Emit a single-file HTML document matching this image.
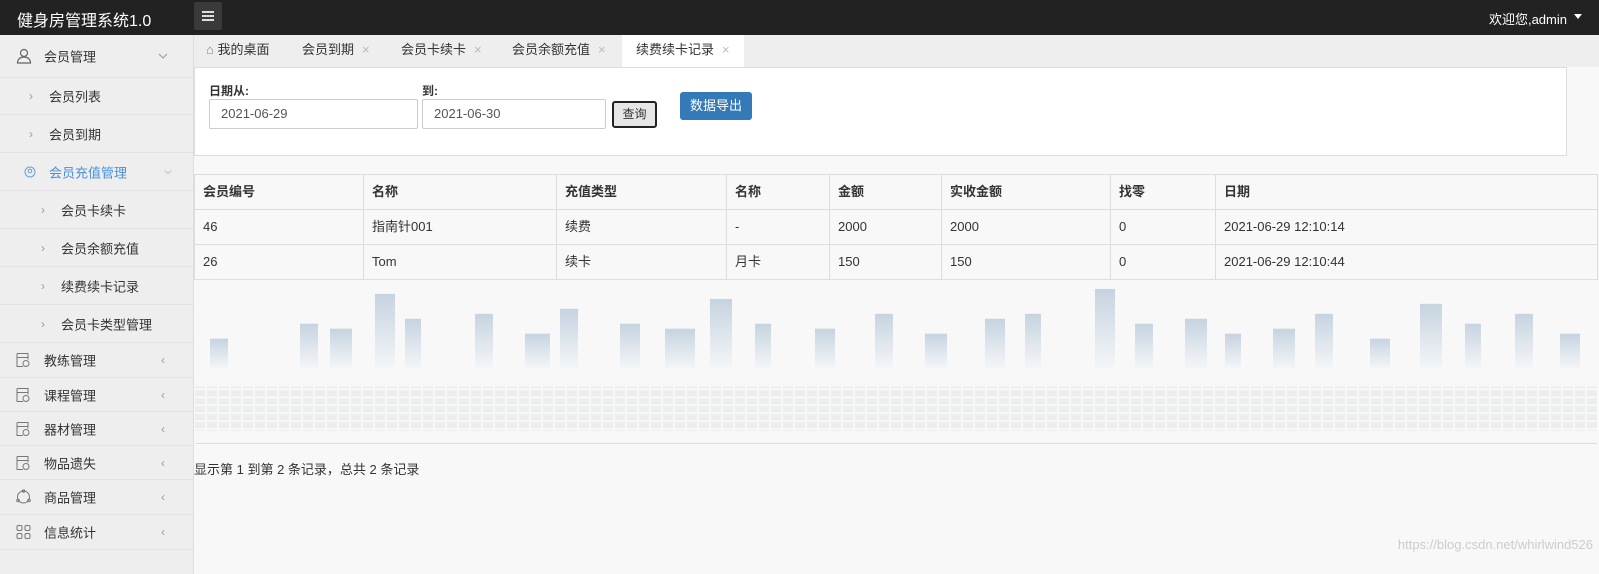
<!DOCTYPE html>
<html><head><meta charset="utf-8"><style>
*{margin:0;padding:0;box-sizing:border-box}
body{width:1599px;height:574px;overflow:hidden;background:#f8f8f8;font-family:"Liberation Sans","Noto Sans CJK SC",sans-serif;font-size:13px;color:#333;position:relative}
.top{position:absolute;left:0;top:0;width:1599px;height:35px;background:#222}
.logo{position:absolute;left:17px;top:7px;color:#fff;font-size:16px}
.ham{position:absolute;left:194px;top:2px;width:28px;height:28px;background:#3a3a3a;border-radius:2px}
.ham i{position:absolute;left:8px;width:12px;height:1.5px;background:#ddd}
.user{position:absolute;right:32px;top:9px;color:#fff;font-size:13px}
.caret{position:absolute;right:17px;top:14px;border:4px solid transparent;border-top:5px solid #fff}
.side{position:absolute;left:0;top:35px;width:194px;height:539px;background:#eee;border-right:1px solid #ddd}
.it{position:absolute;left:0;width:193px;border-bottom:1px solid #e2e2e2;font-size:13px;color:#333}
.it span{position:absolute;top:50%;transform:translateY(-50%)}
.it svg{position:absolute;left:16px;top:50%;transform:translateY(-50%)}
.ar{color:#999;font-size:12px}
.tabs{position:absolute;left:194px;top:35px;width:1405px;height:32px;background:#eee}
.tab{position:absolute;top:0;height:32px;line-height:30px;font-size:13px;color:#333}
.tab b{font-weight:normal;color:#bbb;margin-left:8px}
.panel{position:absolute;left:194px;top:67px;width:1373px;height:89px;background:#fff;border:1px solid #ddd}
.lbl{position:absolute;font-weight:bold;font-size:12px}
.inp{position:absolute;height:30px;border:1px solid #ccc;border-radius:2px;line-height:28px;padding-left:11px;font-size:13px;color:#555;background:#fff}
.q{position:absolute;left:612px;top:101px;width:45px;height:27px;border:2px solid #222;border-radius:3px;background:#e6e6e6;text-align:center;line-height:23px;font-size:12px}
.exp{position:absolute;left:680px;top:92px;width:72px;height:28px;background:#337ab7;border-radius:3px;color:#fff;text-align:center;line-height:27px;font-size:13px}
table{position:absolute;left:194px;top:174px;width:1404px;border-collapse:collapse;font-size:13px}
td,th{border:1px solid #ddd;height:35px;padding:0 0 0 8px;text-align:left;line-height:16px}
th{font-weight:bold}
.city{position:absolute;left:195px;top:279px;width:1402px;height:165px;border-bottom:1px solid #ddd}
.foot{position:absolute;left:194px;top:459px;font-size:13px}
.wm{position:absolute;right:6px;top:537px;color:#ccc;font-size:13px}
</style></head><body>
<div class="top"><div class="logo">健身房管理系统1.0</div>
<div class="ham"><i style="top:9px"></i><i style="top:13px"></i><i style="top:17px"></i></div>
<div class="user">欢迎您,admin</div><div class="caret"></div></div>
<div class="side">
<div class="it" style="top:0;height:43px"><svg width="16" height="16" viewBox="0 0 16 16" fill="none" stroke="#666" stroke-width="1.2"><circle cx="8" cy="5" r="3.5"/><path d="M1.5 15c0-4 3-6 6.5-6s6.5 2 6.5 6z"/></svg><span style="left:44px">会员管理</span><svg style="left:158px" width="10" height="6" viewBox="0 0 10 6" fill="none" stroke="#999"><path d="M1 1l4 4 4-4"/></svg></div>
<div class="it" style="top:43px;height:37px"><span class="ar" style="left:29px">›</span><span style="left:49px">会员列表</span></div>
<div class="it" style="top:80px;height:38px"><span class="ar" style="left:29px">›</span><span style="left:49px">会员到期</span></div>
<div class="it" style="top:118px;height:38px;color:#4a90d9"><svg style="left:24px" width="12" height="12" viewBox="0 0 12 12" fill="none" stroke="#6a9fd8"><circle cx="6" cy="6" r="5"/><circle cx="6" cy="5" r="1.8"/></svg><span style="left:49px">会员充值管理</span><svg style="left:164px" width="8" height="5" viewBox="0 0 10 6" fill="none" stroke="#9bc"><path d="M1 1l4 4 4-4"/></svg></div>
<div class="it" style="top:156px;height:38px"><span class="ar" style="left:41px">›</span><span style="left:61px">会员卡续卡</span></div>
<div class="it" style="top:194px;height:38px"><span class="ar" style="left:41px">›</span><span style="left:61px">会员余额充值</span></div>
<div class="it" style="top:232px;height:38px"><span class="ar" style="left:41px">›</span><span style="left:61px">续费续卡记录</span></div>
<div class="it" style="top:270px;height:38px"><span class="ar" style="left:41px">›</span><span style="left:61px">会员卡类型管理</span></div>
<div class="it" style="top:308px;height:35px"><svg width="14" height="15" viewBox="0 0 14 15" fill="none" stroke="#777"><path d="M1 1h11v6M1 1v13h6M1 5h11"/><circle cx="10" cy="11" r="3"/></svg><span style="left:44px">教练管理</span><span class="ar" style="left:161px">‹</span></div>
<div class="it" style="top:343px;height:34px"><svg width="14" height="15" viewBox="0 0 14 15" fill="none" stroke="#777"><path d="M1 1h11v6M1 1v13h6M1 5h11"/><circle cx="10" cy="11" r="3"/></svg><span style="left:44px">课程管理</span><span class="ar" style="left:161px">‹</span></div>
<div class="it" style="top:377px;height:34px"><svg width="14" height="15" viewBox="0 0 14 15" fill="none" stroke="#777"><path d="M1 1h11v6M1 1v13h6M1 5h11"/><circle cx="10" cy="11" r="3"/></svg><span style="left:44px">器材管理</span><span class="ar" style="left:161px">‹</span></div>
<div class="it" style="top:411px;height:34px"><svg width="14" height="15" viewBox="0 0 14 15" fill="none" stroke="#777"><path d="M1 1h11v6M1 1v13h6M1 5h11"/><circle cx="10" cy="11" r="3"/></svg><span style="left:44px">物品遗失</span><span class="ar" style="left:161px">‹</span></div>
<div class="it" style="top:445px;height:35px"><svg width="15" height="15" viewBox="0 0 15 15" fill="none" stroke="#777"><circle cx="7.5" cy="7.5" r="6"/><circle cx="7.5" cy="1.5" r="1.3"/><circle cx="2" cy="11" r="1.3"/><circle cx="13" cy="11" r="1.3"/></svg><span style="left:44px">商品管理</span><span class="ar" style="left:161px">‹</span></div>
<div class="it" style="top:480px;height:35px"><svg width="15" height="15" viewBox="0 0 15 15" fill="none" stroke="#777"><rect x="1" y="1" width="5" height="5" rx="1.5"/><rect x="9" y="1" width="5" height="5" rx="1.5"/><rect x="1" y="9" width="5" height="5" rx="1.5"/><rect x="9" y="9" width="5" height="5" rx="1.5"/></svg><span style="left:44px">信息统计</span><span class="ar" style="left:161px">‹</span></div>
</div>
<div class="tabs">
<div class="tab" style="left:12px"><span style="color:#888">&#8962;</span> 我的桌面</div>
<div class="tab" style="left:108px">会员到期<b>×</b></div>
<div class="tab" style="left:207px">会员卡续卡<b>×</b></div>
<div class="tab" style="left:318px">会员余额充值<b>×</b></div>
<div class="tab" style="left:428px;width:122px;background:#fff;padding-left:14px">续费续卡记录<b>×</b></div>
</div>
<div class="panel"></div>
<div class="lbl" style="left:209px;top:82px">日期从:</div>
<div class="inp" style="left:209px;top:99px;width:209px">2021-06-29</div>
<div class="lbl" style="left:422px;top:82px">到:</div>
<div class="inp" style="left:422px;top:99px;width:184px">2021-06-30</div>
<div class="q">查询</div>
<div class="exp">数据导出</div>
<table>
<tr><th style="width:169px">会员编号</th><th style="width:193px">名称</th><th style="width:170px">充值类型</th><th style="width:103px">名称</th><th style="width:112px">金额</th><th style="width:169px">实收金额</th><th style="width:105px">找零</th><th>日期</th></tr>
<tr><td>46</td><td>指南针001</td><td>续费</td><td>-</td><td>2000</td><td>2000</td><td>0</td><td>2021-06-29 12:10:14</td></tr>
<tr><td>26</td><td>Tom</td><td>续卡</td><td>月卡</td><td>150</td><td>150</td><td>0</td><td>2021-06-29 12:10:44</td></tr>
</table>
<svg class="city" viewBox="0 0 1402 165" preserveAspectRatio="none">
<defs><linearGradient id="g" x1="0" y1="0" x2="0" y2="1"><stop offset="0" stop-color="#c6d3e0"/><stop offset="1" stop-color="#f4f6f8"/></linearGradient>
<pattern id="p" width="12" height="8" patternUnits="userSpaceOnUse"><rect width="10" height="6" fill="#eceded"/></pattern></defs>
<g fill="url(#g)">
<rect x="15" y="60" width="18" height="30"/><rect x="105" y="45" width="18" height="45"/><rect x="135" y="50" width="22" height="40"/><rect x="180" y="15" width="20" height="75"/><rect x="210" y="40" width="16" height="50"/>
<rect x="280" y="35" width="18" height="55"/><rect x="330" y="55" width="25" height="35"/><rect x="365" y="30" width="18" height="60"/><rect x="425" y="45" width="20" height="45"/><rect x="470" y="50" width="30" height="40"/>
<rect x="515" y="20" width="22" height="70"/><rect x="560" y="45" width="16" height="45"/><rect x="620" y="50" width="20" height="40"/><rect x="680" y="35" width="18" height="55"/><rect x="730" y="55" width="22" height="35"/>
<rect x="790" y="40" width="20" height="50"/><rect x="830" y="35" width="16" height="55"/><rect x="900" y="10" width="20" height="80"/><rect x="940" y="45" width="18" height="45"/><rect x="990" y="40" width="22" height="50"/>
<rect x="1030" y="55" width="16" height="35"/><rect x="1078" y="50" width="22" height="40"/><rect x="1120" y="35" width="18" height="55"/><rect x="1175" y="60" width="20" height="30"/><rect x="1225" y="25" width="22" height="65"/>
<rect x="1270" y="45" width="16" height="45"/><rect x="1320" y="35" width="18" height="55"/><rect x="1365" y="55" width="20" height="35"/></g>
<rect x="0" y="108" width="1402" height="45" fill="url(#p)"/>
</svg>
<div class="foot">显示第 1 到第 2 条记录，总共 2 条记录</div>
<div class="wm">https://blog.csdn.net/whirlwind526</div>
</body></html>
